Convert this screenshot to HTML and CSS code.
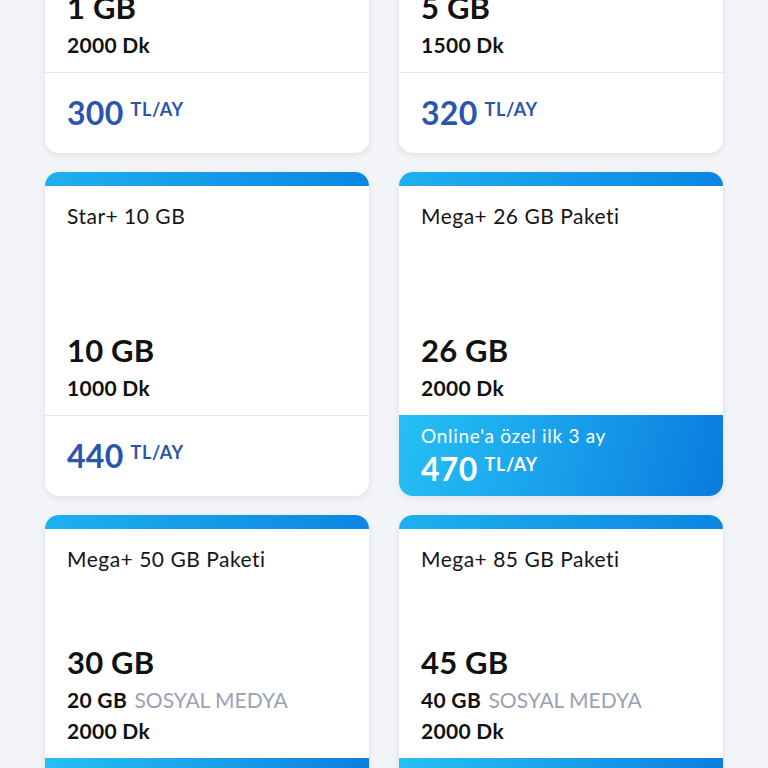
FILE: index.html
```html
<!DOCTYPE html>
<html lang="tr">
<head>
<meta charset="utf-8">
<title>Paketler</title>
<link rel="stylesheet" href="styles.css">
</head>
<body>
<div class="grid">
  <div class="card">
    <div class="bar"></div>
    <div class="body">
      <div class="title">Star+ 1 GB</div>
      <div class="details">
        <div class="big">1 GB</div>
        <div class="line">2000 Dk</div>
      </div>
    </div>
    <div class="foot"><span class="amount">300</span><span class="unit">TL/AY</span></div>
  </div>
  <div class="card">
    <div class="bar"></div>
    <div class="body">
      <div class="title">Star+ 5 GB</div>
      <div class="details">
        <div class="big">5 GB</div>
        <div class="line">1500 Dk</div>
      </div>
    </div>
    <div class="foot"><span class="amount">320</span><span class="unit">TL/AY</span></div>
  </div>

  <div class="card">
    <div class="bar"></div>
    <div class="body">
      <div class="title">Star+ 10 GB</div>
      <div class="details">
        <div class="big">10 GB</div>
        <div class="line">1000 Dk</div>
      </div>
    </div>
    <div class="foot"><span class="amount">440</span><span class="unit">TL/AY</span></div>
  </div>
  <div class="card">
    <div class="bar"></div>
    <div class="body">
      <div class="title">Mega+ 26 GB Paketi</div>
      <div class="details">
        <div class="big">26 GB</div>
        <div class="line">2000 Dk</div>
      </div>
    </div>
    <div class="foot promo">
      <div class="note">Online'a özel ilk 3 ay</div>
      <div class="price"><span class="amount">470</span><span class="unit">TL/AY</span></div>
    </div>
  </div>

  <div class="card">
    <div class="bar"></div>
    <div class="body">
      <div class="title">Mega+ 50 GB Paketi</div>
      <div class="details">
        <div class="big">30 GB</div>
        <div class="line">20 GB <span class="muted">SOSYAL MEDYA</span></div>
        <div class="line">2000 Dk</div>
      </div>
    </div>
    <div class="foot promo">
      <div class="note">Online'a özel ilk 3 ay</div>
      <div class="price"><span class="amount">520</span><span class="unit">TL/AY</span></div>
    </div>
  </div>
  <div class="card">
    <div class="bar"></div>
    <div class="body">
      <div class="title">Mega+ 85 GB Paketi</div>
      <div class="details">
        <div class="big">45 GB</div>
        <div class="line">40 GB <span class="muted">SOSYAL MEDYA</span></div>
        <div class="line">2000 Dk</div>
      </div>
    </div>
    <div class="foot promo">
      <div class="note">Online'a özel ilk 3 ay</div>
      <div class="price"><span class="amount">570</span><span class="unit">TL/AY</span></div>
    </div>
  </div>
</div>
</body>
</html>
```

FILE: styles.css
```css
html, body {
  margin: 0;
  padding: 0;
  background: #f3f4f7;
  font-family: "Lato", "Noto Sans", sans-serif;
  color: #111;
  overflow: hidden;
}

.grid {
  display: grid;
  grid-template-columns: 324px 324px;
  column-gap: 30px;
  row-gap: 19px;
  padding: 0 45px;
  margin-top: -171px;
}

.card {
  background: #fff;
  border-radius: 14px;
  overflow: hidden;
  box-shadow: 0 2px 6px rgba(30, 40, 70, 0.10);
  display: flex;
  flex-direction: column;
}

.bar {
  height: 14px;
  background: linear-gradient(90deg, #1eb0ee 0%, #0b86e2 100%);
}

.body {
  height: 229px;
  box-sizing: border-box;
  padding: 18px 22px 12px;
  display: flex;
  flex-direction: column;
  justify-content: space-between;
}

.title {
  font-size: 21px;
  line-height: 24px;
  font-weight: 400;
  letter-spacing: 0.5px;
  color: #151515;
}

.details {
  display: flex;
  flex-direction: column;
}

.big {
  font-size: 31px;
  line-height: 40px;
  font-weight: 700;
  margin-bottom: 2px;
  letter-spacing: 0.2px;
}

.line {
  font-size: 21px;
  line-height: 31px;
  font-weight: 700;
  letter-spacing: 0.3px;
}

.muted {
  font-weight: 400;
  color: #9aa1b5;
  letter-spacing: 0;
  margin-left: 2px;
}

.foot {
  height: 81px;
  box-sizing: border-box;
  border-top: 1px solid #e4e7ef;
  padding: 0 22px;
  display: flex;
  align-items: center;
  color: #2b55ad;
}

.amount {
  font-size: 32px;
  font-weight: 700;
  line-height: 36px;
  letter-spacing: 0.3px;
}

.unit {
  font-size: 18px;
  font-weight: 700;
  line-height: 20px;
  margin-left: 7px;
  letter-spacing: 0.6px;
  align-self: flex-start;
  margin-top: 26px;
}

.foot.promo {
  border-top: none;
  color: #fff;
  background: linear-gradient(105deg, #26c0f4 0%, #1aa3ec 45%, #0a7ade 100%);
  flex-direction: column;
  align-items: flex-start;
  justify-content: center;
}

.note {
  font-size: 19px;
  line-height: 22px;
  font-weight: 400;
  letter-spacing: 0.7px;
}

.price {
  display: flex;
  align-items: flex-start;
  margin-top: 4px;
}

.price .unit {
  margin-top: 3px;
}
```
